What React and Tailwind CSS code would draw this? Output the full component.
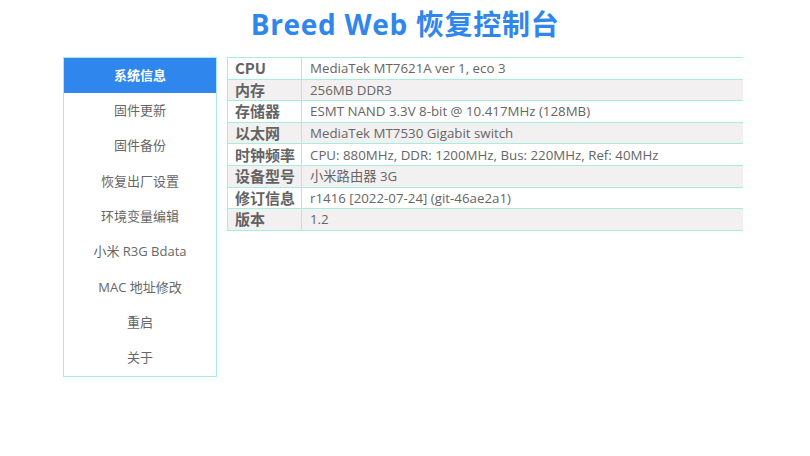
import React from 'react';

const menu = [
  '系统信息',
  '固件更新',
  '固件备份',
  '恢复出厂设置',
  '环境变量编辑',
  '小米 R3G Bdata',
  'MAC 地址修改',
  '重启',
  '关于',
];

const info = [
  ['CPU', 'MediaTek MT7621A ver 1, eco 3'],
  ['内存', '256MB DDR3'],
  ['存储器', 'ESMT NAND 3.3V 8-bit @ 10.417MHz (128MB)'],
  ['以太网', 'MediaTek MT7530 Gigabit switch'],
  ['时钟频率', 'CPU: 880MHz, DDR: 1200MHz, Bus: 220MHz, Ref: 40MHz'],
  ['设备型号', '小米路由器 3G'],
  ['修订信息', 'r1416 [2022-07-24] (git-46ae2a1)'],
  ['版本', '1.2'],
];

const font = { fontFamily: '"Open Sans", "Noto Sans CJK SC", sans-serif' };
const labelFont = { fontFamily: '"Noto Sans CJK SC", "Open Sans", sans-serif' };

export default function App() {
  return (
    <div className="w-[810px] h-[456px] bg-white" style={font}>
      {/* 标题 */}
      <h1 className="text-center text-[28px] leading-[48px] font-bold text-[#2f86ec] tracking-[0.7px]">
        Breed Web 恢复控制台
      </h1>

      <div className="flex items-start pl-[63px] pt-[9px]">
        {/* 左侧菜单 */}
        <ul className="w-[154px] border border-[#a3eedd]">
          {menu.map((item, i) => (
            <li
              key={item}
              className={
                i === 0
                  ? 'h-[35.3px] flex items-center justify-center text-[13px] font-bold text-white bg-[#2f86ec]'
                  : 'h-[35.3px] flex items-center justify-center text-[13px] text-[#666]'
              }
            >
              {item}
            </li>
          ))}
        </ul>

        {/* 信息表 */}
        <table className="ml-[10px] w-[516px] border-collapse">
          <tbody>
            {info.map(([k, v], i) => (
              <tr
                key={k}
                className={i % 2 === 1 ? 'h-[21.6px] bg-[#f2f0f0]' : 'h-[21.6px] bg-white'}
              >
                <td
                  className="w-[74px] pl-[7px] border border-[#a3eedd] text-[15px] font-bold text-[#636363] leading-[20px]"
                  style={labelFont}
                >
                  {k}
                </td>
                <td className="pl-[8px] border-y border-[#a3eedd] text-[13.3px] text-[#666] leading-[20px]">
                  {v}
                </td>
              </tr>
            ))}
          </tbody>
        </table>
      </div>
    </div>
  );
}
